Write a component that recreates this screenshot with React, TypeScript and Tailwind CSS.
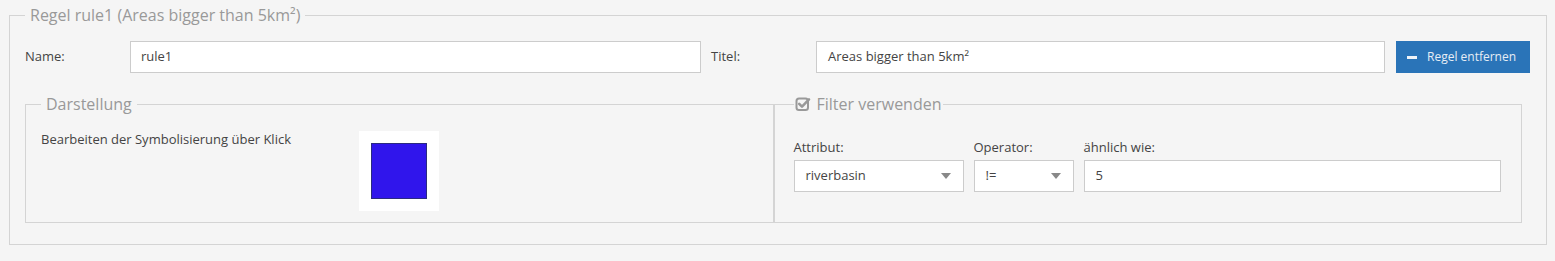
import React from "react";

const font = { fontFamily: '"Open Sans", "Liberation Sans", sans-serif' };

function Caret() {
  return (
    <svg width="10" height="6" viewBox="0 0 10 6" className="shrink-0" aria-hidden>
      <path d="M0 0 L10 0 L5 6 Z" fill="#888" />
    </svg>
  );
}

function CheckSquare() {
  return (
    <svg width="16" height="16" viewBox="0 0 16 16" className="mr-[6px] inline-block align-[-2px]" aria-hidden>
      <rect x="1.5" y="2.5" width="11.5" height="11.5" rx="2.5" fill="none" stroke="#999" strokeWidth="2" />
      <path d="M4.2 7.8 L7 10.6 L14 3.4" fill="none" stroke="#999" strokeWidth="2.6" strokeLinecap="round" strokeLinejoin="round" />
    </svg>
  );
}

export default function App() {
  return (
    <div className="h-[261px] w-full bg-[#f5f5f5] pt-[5px] text-[13px] text-[#444]" style={font}>
      <fieldset className="ml-[9px] mr-[8px] border border-[#d4d4d4] px-[15px] pb-[21px] pt-[16px]">
        <legend className="px-[5px] text-[16px] leading-[20px] text-[#999]">
          Regel rule1 (Areas bigger than 5km²)
        </legend>

        <div className="flex h-[32px] items-center">
          <label className="w-[105px]">Name:</label>
          <div className="flex h-[32px] w-[571px] items-center border border-[#ccc] bg-white px-[10px]">rule1</div>
          <label className="ml-[10px] w-[105px]">Titel:</label>
          <div className="flex h-[32px] w-[569px] items-center border border-[#ccc] bg-white px-[11px]">
            Areas bigger than 5km²
          </div>
          <button className="ml-[11px] flex h-[32px] w-[134px] items-center bg-[#2a74b8] pl-[11px] text-[12px] text-[#e6edf5]">
            <span className="mr-[10px] h-[3px] w-[10px] bg-[#eef3f8]" />
            Regel entfernen
          </button>
        </div>

        <div className="mr-[9px] mt-[21px] grid grid-cols-2">
          <fieldset className="border border-[#d4d4d4] px-[15px] pb-[10px] pt-[16px]">
            <legend className="px-[5px] text-[16px] leading-[20px] text-[#999]">Darstellung</legend>
            <div className="flex items-start">
              <p className="w-[318px] leading-[18px]">Bearbeiten der Symbolisierung über Klick</p>
              <div className="mt-[1px] flex h-[80px] w-[80px] items-center justify-center bg-white">
                <div className="h-[56px] w-[56px] border border-[#2b2a80] bg-[#3015ec]" />
              </div>
            </div>
          </fieldset>

          <fieldset className="border border-[#d4d4d4] px-[19px] pb-[30px] pt-[24px]">
            <legend className="px-[1px] text-[16px] leading-[20px] text-[#999]">
              <CheckSquare />
              Filter verwenden
            </legend>
            <div className="flex items-start gap-[10px]">
              <div className="w-[170px]">
                <div className="mb-[4px] leading-[18px]">Attribut:</div>
                <div className="flex h-[32px] items-center justify-between border border-[#ccc] bg-white pl-[11px] pr-[12px]">
                  riverbasin
                  <Caret />
                </div>
              </div>
              <div className="w-[100px]">
                <div className="mb-[4px] leading-[18px]">Operator:</div>
                <div className="flex h-[32px] items-center justify-between border border-[#ccc] bg-white pl-[11px] pr-[12px]">
                  !=
                  <Caret />
                </div>
              </div>
              <div className="w-[417px]">
                <div className="mb-[4px] leading-[18px]">ähnlich wie:</div>
                <div className="flex h-[32px] items-center border border-[#ccc] bg-white px-[11px]">5</div>
              </div>
            </div>
          </fieldset>
        </div>
      </fieldset>
    </div>
  );
}
